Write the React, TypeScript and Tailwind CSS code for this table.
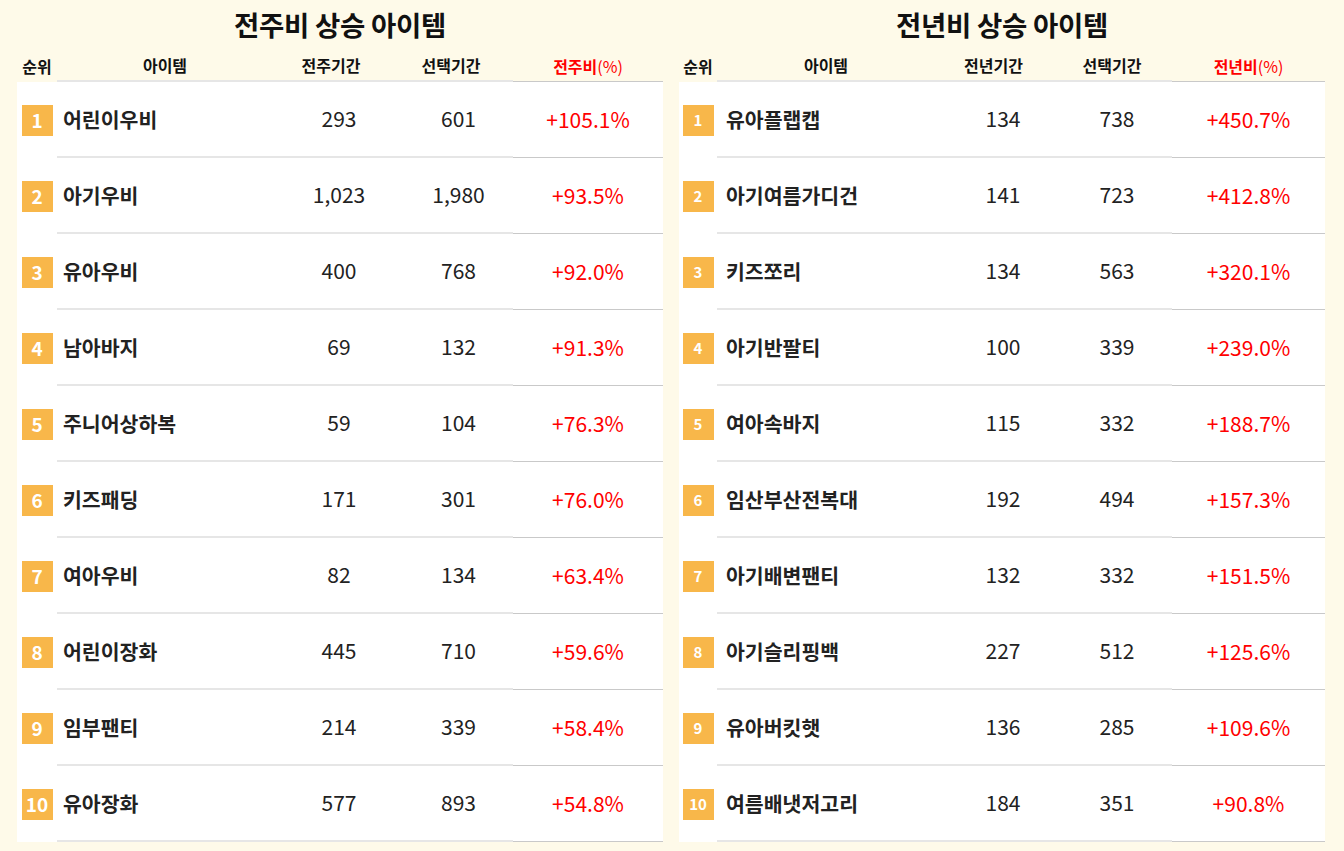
import React from "react";

type Row = { name: string; prev: string; cur: string; ratio: string };

const weekly: Row[] = [
  { name: "어린이우비", prev: "293", cur: "601", ratio: "+105.1%" },
  { name: "아기우비", prev: "1,023", cur: "1,980", ratio: "+93.5%" },
  { name: "유아우비", prev: "400", cur: "768", ratio: "+92.0%" },
  { name: "남아바지", prev: "69", cur: "132", ratio: "+91.3%" },
  { name: "주니어상하복", prev: "59", cur: "104", ratio: "+76.3%" },
  { name: "키즈패딩", prev: "171", cur: "301", ratio: "+76.0%" },
  { name: "여아우비", prev: "82", cur: "134", ratio: "+63.4%" },
  { name: "어린이장화", prev: "445", cur: "710", ratio: "+59.6%" },
  { name: "임부팬티", prev: "214", cur: "339", ratio: "+58.4%" },
  { name: "유아장화", prev: "577", cur: "893", ratio: "+54.8%" },
];

const yearly: Row[] = [
  { name: "유아플랩캡", prev: "134", cur: "738", ratio: "+450.7%" },
  { name: "아기여름가디건", prev: "141", cur: "723", ratio: "+412.8%" },
  { name: "키즈쪼리", prev: "134", cur: "563", ratio: "+320.1%" },
  { name: "아기반팔티", prev: "100", cur: "339", ratio: "+239.0%" },
  { name: "여아속바지", prev: "115", cur: "332", ratio: "+188.7%" },
  { name: "임산부산전복대", prev: "192", cur: "494", ratio: "+157.3%" },
  { name: "아기배변팬티", prev: "132", cur: "332", ratio: "+151.5%" },
  { name: "아기슬리핑백", prev: "227", cur: "512", ratio: "+125.6%" },
  { name: "유아버킷햇", prev: "136", cur: "285", ratio: "+109.6%" },
  { name: "여름배냇저고리", prev: "184", cur: "351", ratio: "+90.8%" },
];

const font = { fontFamily: '"Noto Sans CJK KR", "Noto Sans", sans-serif' };

const clsxLite = (...c: string[]) => c.filter(Boolean).join(" ");

const RankTable = ({
  title,
  prevLabel,
  ratioLabel,
  rows,
  variant,
}: {
  title: string;
  prevLabel: string;
  ratioLabel: string;
  rows: Row[];
  variant: "week" | "year";
}) => {
  const week = variant === "week";
  // header and body cells sit on slightly different column widths
  const headCols = week
    ? "grid-cols-[40px_216px_116px_124px_150px]"
    : "grid-cols-[38px_218px_117px_120px_153px]";
  const rowCols = week
    ? "grid-cols-[40px_217px_130px_109px_150px]"
    : "grid-cols-[38px_227px_118px_110px_153px]";
  const line = "border-b-2 border-[#e6e6e6]";
  const lastLine = "border-b border-[#c9c9c9]";

  return (
    <div className="w-[646px]">
      <h2 className="h-[50px] flex items-center justify-center text-[27.5px] font-bold text-[#111] tracking-[-0.3px]">
        {title}
      </h2>

      {/* header row */}
      <div className={`grid ${headCols} h-[32px] text-[16px] font-bold text-[#111]`}>
        <div className="flex items-center justify-center">순위</div>
        <div className={`flex items-center justify-center ${line}`}>아이템</div>
        <div className={`flex items-center justify-center ${line}`}>{prevLabel}</div>
        <div className={`flex items-center justify-center ${line}`}>선택기간</div>
        <div className={`flex items-center justify-center text-[#ff0000] ${lastLine}`}>
          <span>{ratioLabel}</span>
          <span className="font-normal">(%)</span>
        </div>
      </div>

      <div className="bg-white">
        {rows.map((r, i) => (
          <div key={r.name} className={`grid ${rowCols} h-[76px]`}>
            <div className="flex items-center justify-center">
              <span
                className={clsxLite(
                  "flex items-center justify-center bg-[#f8b74a] text-white font-bold w-[31px] h-[31px]",
                  week ? "text-[19px]" : "text-[15px]"
                )}
              >
                {i + 1}
              </span>
            </div>
            <div
              className={`flex items-center ${week ? "pl-[6px]" : "pl-[9px]"} text-[20.5px] font-bold text-[#222] ${line}`}
            >
              {r.name}
            </div>
            <div className={`flex items-center justify-center text-[21px] text-[#222] ${line}`}>
              {r.prev}
            </div>
            <div className={`flex items-center justify-center text-[21px] text-[#222] ${line}`}>
              {r.cur}
            </div>
            <div className={`flex items-center justify-center text-[21px] text-[#ff0000] ${lastLine}`}>
              {r.ratio}
            </div>
          </div>
        ))}
      </div>
    </div>
  );
};

export default function App() {
  return (
    <div className="w-[1344px] h-[851px] bg-[#fefae9] overflow-hidden" style={font}>
      <div className="flex gap-[16px] pl-[17px]">
        <RankTable
          title="전주비 상승 아이템"
          prevLabel="전주기간"
          ratioLabel="전주비"
          rows={weekly}
          variant="week"
        />
        <RankTable
          title="전년비 상승 아이템"
          prevLabel="전년기간"
          ratioLabel="전년비"
          rows={yearly}
          variant="year"
        />
      </div>
    </div>
  );
}
